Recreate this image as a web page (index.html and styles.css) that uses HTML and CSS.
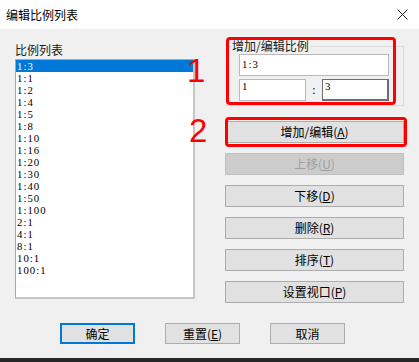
FILE: index.html
```html
<!DOCTYPE html>
<html lang="zh-CN">
<head>
<meta charset="utf-8">
<title>编辑比例列表</title>
<link rel="stylesheet" href="styles.css">
</head>
<body>
<div class="window">
  <header class="titlebar">
    <span class="title">编辑比例列表</span>
    <svg class="close" width="11" height="11" viewBox="0 0 11 11" aria-label="关闭"><path d="M0.5 0.5L10.5 10.5M10.5 0.5L0.5 10.5" stroke="#1a1a1a" stroke-width="1" fill="none"/></svg>
  </header>
  <div class="dialog">
    <div class="main">
      <section class="list-col">
        <div class="label">比例列表</div>
        <ul class="listbox">
          <li class="item selected">1:3</li>
          <li class="item">1:1</li>
          <li class="item">1:2</li>
          <li class="item">1:4</li>
          <li class="item">1:5</li>
          <li class="item">1:8</li>
          <li class="item">1:10</li>
          <li class="item">1:16</li>
          <li class="item">1:20</li>
          <li class="item">1:30</li>
          <li class="item">1:40</li>
          <li class="item">1:50</li>
          <li class="item">1:100</li>
          <li class="item">2:1</li>
          <li class="item">4:1</li>
          <li class="item">8:1</li>
          <li class="item">10:1</li>
          <li class="item">100:1</li>
        </ul>
      </section>
      <section class="side-col">
        <fieldset class="group">
          <legend>增加/编辑比例</legend>
          <div class="group-body">
            <div class="edit edit-wide">1:3</div>
            <div class="ratio-row">
              <div class="edit edit-half">1</div>
              <span class="colon">:</span>
              <div class="edit edit-half focused">3</div>
            </div>
          </div>
        </fieldset>
        <div class="btn-stack">
          <button class="btn">增加/编辑(<u>A</u>)</button>
          <button class="btn" disabled>上移(<u>U</u>)</button>
          <button class="btn">下移(<u>D</u>)</button>
          <button class="btn">删除(<u>R</u>)</button>
          <button class="btn">排序(<u>T</u>)</button>
          <button class="btn">设置视口(<u>P</u>)</button>
        </div>
      </section>
      <div class="annot box-group"></div>
      <div class="annot box-button"></div>
      <span class="annot num num-1">1</span>
      <span class="annot num num-2">2</span>
    </div>
    <div class="footer-buttons">
      <button class="btn btn-foot default">确定</button>
      <button class="btn btn-foot">重置(<u>E</u>)</button>
      <button class="btn btn-foot">取消</button>
    </div>
  </div>
  <div class="edge"></div>
</div>
</body>
</html>
```
FILE: styles.css
```css
* { box-sizing: border-box; }
html, body { margin: 0; padding: 0; }
body {
  width: 419px;
  height: 362px;
  overflow: hidden;
  font-family: "Noto Sans CJK SC", sans-serif;
  font-size: 12px;
  color: #000;
  background: #f0f0f0;
}
.window { display: flex; flex-direction: column; height: 362px; }
.titlebar {
  height: 29px;
  flex: none;
  background: #fff;
  display: flex;
  align-items: center;
  justify-content: space-between;
  padding: 0 11px 0 6px;
}
.title { font-size: 12px; line-height: 29px; color: #000; }
.close { display: block; }

.dialog { flex: 1; background: #f0f0f0; display: flex; flex-direction: column; }
.main { position: relative; display: flex; padding-left: 15px; }

.list-col { width: 180px; padding-top: 13px; }
.label { line-height: 15px; margin-bottom: 2px; color: #1a1a1a; }
.listbox {
  list-style: none;
  margin: 0;
  padding: 0;
  height: 240px;
  background: #fff;
  border: 1px solid #a8a8a8;
  border-right: 2px solid #c6c6c6;
  border-bottom: 2px solid #c6c6c6;
  font-family: "Liberation Serif", serif;
  font-size: 10.8px;
  letter-spacing: 1px;
}
.item { height: 12px; line-height: 12px; padding-left: 1px; white-space: nowrap; color: #000; }
.item.selected { background: #0078d7; color: #fff; }

.side-col { margin-left: 30px; width: 179px; padding-top: 11px; display: flex; flex-direction: column; }
.group {
  margin: 0 0 0 1px;
  width: 178px;
  min-width: 0;
  border: 1px solid #dcdcdc;
  padding: 0 14px 4px 4px;
}
.group legend { padding: 0 1px; line-height: 12px; font-size: 12px; color: #1a1a1a; }
.group-body { margin-left: 8px; display: flex; flex-direction: column; gap: 3px; padding-top: 2px; }
.edit {
  height: 22px;
  background: #fff;
  border: 1px solid #b9b9b9;
  font-family: "Liberation Serif", serif;
  font-size: 10.8px;
  letter-spacing: 1px;
  line-height: 12px;
  padding: 0 2px;
  color: #000;
}
.edit-wide { padding-top: 3px; }
.ratio-row { display: flex; }
.edit-half { width: 67px; }
.colon { width: 16px; text-align: center; font-family: "Liberation Serif", serif; font-size: 12px; line-height: 22px; }
.edit.focused { border-color: #6e6e6e; border-right-width: 2px; border-bottom-width: 2px; }

.btn-stack { margin-top: 15px; display: flex; flex-direction: column; gap: 10px; }
.btn {
  height: 22px;
  width: 179px;
  background: #e1e1e1;
  border: 1px solid #adadad;
  font: 12px "Noto Sans CJK SC", sans-serif;
  line-height: 20px;
  color: #000;
  padding: 0;
}
.btn:disabled { background: #cccccc; border-color: #bfbfbf; color: #a0a0a0; }

.footer-buttons { display: flex; gap: 30px; padding-left: 60px; margin-top: 20px; }
.btn-foot { width: 75px; height: 21px; line-height: 19px; }
.btn.default { border: 2px solid #0078d7; line-height: 17px; }

.edge { height: 4px; flex: none; background: #262626; }

.annot { position: absolute; }
.box-group { left: 226px; top: 8px; width: 170px; height: 68px; border: 3px solid #ff0000; border-radius: 4px; }
.box-button { left: 225px; top: 88px; width: 182px; height: 30px; border: 3px solid #ff0000; border-radius: 4px; }
.num { font-family: "Liberation Sans", sans-serif; font-size: 33px; line-height: 1; color: #ff0000; }
.num-1 { left: 187px; top: 25px; }
.num-2 { left: 189px; top: 85px; }
```
